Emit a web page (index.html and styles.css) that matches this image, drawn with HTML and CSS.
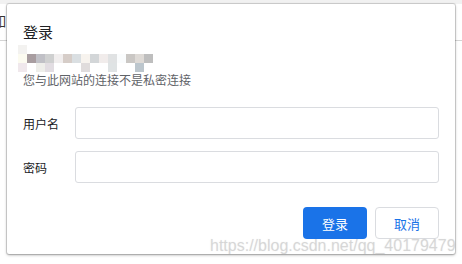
FILE: index.html
```html
<!DOCTYPE html>
<html>
    <head>
        <title>登录</title>
        <link rel="stylesheet" href="styles.css">
    </head>
    <body>
        <div class="toolbar">
            <div class="toolbar-strip"></div>
            <div class="toolbar-row">
                <span class="toolbar-text">如</span>
            </div>
        </div>

        <div class="dialog">
            <h2 class="dialog-title">登录</h2>
            <div class="mosaic">
                <i style="background:#f3f2f0"></i><i></i><i></i><i></i><i></i><i></i><i></i><i></i><i></i><i></i><i></i><i></i><i></i><i></i><i></i>
                <i style="background:#fcfbf0"></i><i style="background:#a89da0"></i><i style="background:#c0c0c6"></i><i style="background:#cfd0d0"></i><i style="background:#f1eeee"></i><i style="background:#d6cdc8"></i><i style="background:#dadfe2"></i><i style="background:#f7f3ee"></i><i style="background:#d3d6d8"></i><i style="background:#f1eceb"></i><i style="background:#e0e2e3"></i><i style="background:#fafcfd"></i><i style="background:#cac7c4"></i><i style="background:#dedad6"></i><i style="background:#bebebe"></i>
                <i style="background:#f0e8ec"></i><i></i><i style="background:#eeeeea"></i><i style="background:#e2dde2"></i><i></i><i></i><i></i><i style="background:#e0dcdc"></i><i></i><i></i><i style="background:#dfe3e4"></i><i></i><i></i><i style="background:#bcc6cd"></i><i></i>
            </div>
            <p class="dialog-sub">您与此网站的连接不是私密连接</p>

            <div class="form">
                <label class="form-row">
                    <span class="form-label">用户名</span>
                    <input type="text" class="form-input">
                </label>
                <label class="form-row">
                    <span class="form-label">密码</span>
                    <input type="password" class="form-input">
                </label>
            </div>

            <div class="dialog-actions">
                <button class="btn btn-primary">登录</button>
                <button class="btn btn-secondary">取消</button>
            </div>
        </div>

        <div class="watermark">https://blog.csdn.net/qq_40179479</div>
    </body>
</html>
```

FILE: styles.css
```css
body {
    margin: 0;
    width: 462px;
    height: 264px;
    overflow: hidden;
    position: relative;
    background: #ffffff;
    font-family: "Noto Sans CJK SC", "Liberation Sans", sans-serif;
    color: #202124;
}

.toolbar-strip {
    height: 4px;
    background: #f1f1f1;
}

.toolbar-row {
    height: 36px;
    border-bottom: 1px solid #d4d4d4;
    display: flex;
    align-items: center;
}

.toolbar-text {
    font-size: 13px;
    margin-left: -7px;
    margin-top: -4px;
    color: #333;
}

.dialog {
    position: absolute;
    top: 4px;
    left: 7px;
    width: 448px;
    height: 250px;
    box-sizing: border-box;
    padding: 18px 16px 0 16px;
    background: #ffffff;
    border-radius: 2px;
    box-shadow: 0 0 0 1px rgba(0, 0, 0, 0.12), 0 1px 3px rgba(0, 0, 0, 0.35);
}

.dialog-title {
    margin: 0;
    font-size: 15px;
    line-height: 20px;
    font-weight: normal;
    color: #202124;
}

.mosaic {
    display: grid;
    grid-template-columns: repeat(15, 9px);
    grid-auto-rows: 9px;
    margin: 3px 0 0 -5px;
}

.mosaic i {
    display: block;
}

.dialog-sub {
    margin: 0;
    font-size: 12px;
    line-height: 16px;
    color: #5f6368;
}

.form {
    display: flex;
    flex-direction: column;
    gap: 12px;
    margin-top: 19px;
}

.form-row {
    display: flex;
    align-items: center;
}

.form-label {
    width: 52px;
    font-size: 12px;
    color: #202124;
}

.form-input {
    flex: 1;
    height: 32px;
    box-sizing: border-box;
    margin: 0;
    border: 1px solid #dadce0;
    border-radius: 3px;
    background: #ffffff;
    outline: none;
}

.dialog-actions {
    display: flex;
    justify-content: flex-end;
    gap: 8px;
    margin-top: 24px;
}

.btn {
    width: 64px;
    height: 32px;
    border-radius: 4px;
    font-family: "Noto Sans CJK SC", "Liberation Sans", sans-serif;
    font-size: 13px;
    cursor: pointer;
    padding: 0;
}

.btn-primary {
    background: #1a73e8;
    border: none;
    color: #ffffff;
}

.btn-secondary {
    background: #ffffff;
    border: 1px solid #dadce0;
    color: #1a73e8;
}

.watermark {
    position: absolute;
    left: 210px;
    top: 237px;
    font-family: "Liberation Sans", Arial, sans-serif;
    font-size: 16px;
    line-height: 18px;
    color: rgba(190, 190, 190, 0.45);
    text-shadow: 0 0 1px rgba(160, 160, 160, 0.25);
    white-space: nowrap;
}
```
